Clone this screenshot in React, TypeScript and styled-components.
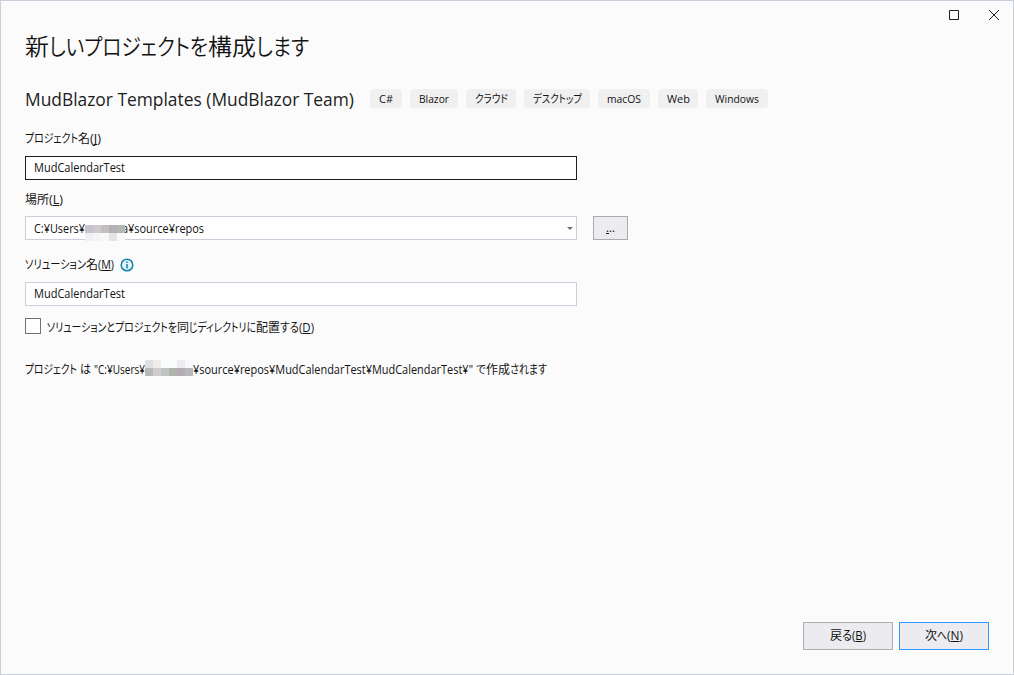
import React, { useLayoutEffect, useRef, useState } from "react";
import styled, { createGlobalStyle } from "styled-components";

const Global = createGlobalStyle`
  * { box-sizing: border-box; }
  body { margin: 0; background: #fbfbfb; color: #121212; font: 12px/16px "Open Sans", "Noto Sans CJK JP", sans-serif; }
`;

const Dialog = styled.main`
  width: 1014px; height: 675px; display: flex; flex-direction: column;
  border: 1px solid #cccedb; background: #fbfbfb; white-space: nowrap;
`;
const TitleBar = styled.header`
  height: 28px; display: flex; justify-content: flex-end; align-items: center;
  gap: 28px; padding-right: 13px;
`;
const Body = styled.section`flex: 1; padding: 0 24px; display: flex; flex-direction: column; align-items: flex-start;`;
const Heading = styled.h1`margin: 0; height: 36px; line-height: 33px; font-size: 23px; font-weight: 350; font-family: "Noto Sans CJK JP", sans-serif;`;
const TemplateRow = styled.div`display: flex; align-items: center; height: 28px; margin-top: 20px; gap: 16px;`;
const TemplateName = styled.h2`margin: 0; font-size: 18px; line-height: 28px; font-weight: 400; color: #1e1e1e;`;
const Tags = styled.div`display: flex; gap: 8px; margin-top: -1px;`;
const Tag = styled.span<{ $w: number }>`
  width: ${p => p.$w}px; height: 19px; border-radius: 4px; background: #f0f0f0; color: #121212;
  display: flex; justify-content: center; font-size: 11px; line-height: 19px;
`;
const Label = styled.label<{ $top: number }>`display: flex; align-items: center; height: 16px; margin-top: ${p => p.$top}px;`;
const Field = styled.div<{ $active?: boolean; $top: number }>`
  width: 552px; height: 24px; margin-top: ${p => p.$top}px; padding: 0 2px 0 8px; background: #fff;
  border: 1px solid ${p => (p.$active ? "#1e1e1e" : "#cccedb")}; line-height: 22px;
  display: flex; align-items: center; justify-content: space-between;
`;
const FieldRow = styled.div`display: flex; gap: 16px;`;
const Button = styled.button<{ $w: number; $h: number; $primary?: boolean }>`
  width: ${p => p.$w}px; height: ${p => p.$h}px; padding: 0; background: #ececf0; color: #121212;
  border: 1px solid ${p => (p.$primary ? "#3399ff" : "#acacac")}; font: inherit;
  display: flex; justify-content: center; align-items: center;
`;
const Browse = styled(Button)`margin-top: 8px;`;
const CheckRow = styled.label`display: flex; align-items: center; gap: 6px; height: 16px; margin-top: 12px;`;
const CheckText = styled.span`display: flex; padding-top: 3px;`;
const CheckBox = styled.span`width: 16px; height: 16px; border: 1px solid #717171; background: #fefefe;`;
const Summary = styled.p`margin: 28px 0 0; height: 16px; display: flex;`;
const Footer = styled.footer`display: flex; justify-content: flex-end; gap: 6px; padding: 0 24px 24px;`;
const Key = styled.span`text-decoration: underline; text-decoration-thickness: 1px; text-underline-offset: 1px; text-decoration-skip-ink: none;`;
const Info = styled.svg`margin-left: 6px;`;

const Slot = styled.span<{ $w: number; $gap?: number }>`
  display: inline-block; width: ${p => p.$w}px; margin-left: ${p => p.$gap ?? 0}px;
  font-feature-settings: "palt"; white-space: pre;
`;
const Inner = styled.span`display: inline-block; transform-origin: 0 50%;`;

/* A run of text condensed or widened to an exact advance width. */
function Run({ w, gap, children }: { w: number; gap?: number; children: React.ReactNode }) {
  const ref = useRef<HTMLSpanElement>(null);
  const [scale, setScale] = useState(1);
  useLayoutEffect(() => {
    const natural = ref.current?.getBoundingClientRect().width;
    if (natural) setScale(w / natural);
  }, [w]);
  return (
    <Slot $w={w} $gap={gap}>
      <Inner ref={ref} style={{ transform: `scaleX(${scale})` }}>{children}</Inner>
    </Slot>
  );
}

const Access = ({ k, w }: { k: string; w: number }) => <Run w={w}>(<Key>{k}</Key>)</Run>;

const Masked = styled.span<{ $cols: number; $w: number; $top: number }>`
  display: grid; grid-template-columns: repeat(${p => p.$cols}, 8px); grid-auto-rows: 8px;
  width: ${p => p.$w}px; height: 16px; margin-top: ${p => p.$top}px; z-index: 1;
`;
const Cell = styled.i<{ $c: string }>`background: ${p => p.$c};`;
const Mask = ({ cells, cols, top }: { cells: string[]; cols: number; top: number }) => (
  <Masked $cols={cols} $w={cols * 8} $top={top}>{cells.map((c, i) => <Cell key={i} $c={c} />)}</Masked>
);
const Path = styled.span`display: flex; height: 22px; line-height: 24px;`;
const Caret = styled.svg`margin-top: 2px;`;

const tags: [string, number, number][] = [
  ["C#", 32, 14], ["Blazor", 48, 30], ["クラウド", 50, 33], ["デスクトップ", 66, 49],
  ["macOS", 52, 34], ["Web", 40, 23], ["Windows", 62, 44],
];

export default function App() {
  return (
    <>
      <Global />
      <Dialog>
        <TitleBar>
          <svg width="12" height="12" viewBox="0 0 12 12"><path d="M1.5 1.5h9v9h-9z" fill="none" stroke="#1e1e1e" /></svg>
          <svg width="12" height="12" viewBox="0 0 12 12"><path d="M1 1l10 10M11 1L1 11" stroke="#1e1e1e" /></svg>
        </TitleBar>
        <Body>
          <Heading>
            <Run w={24}>新</Run><Run w={159}>しいプロジェクトを</Run><Run w={48}>構成</Run><Run w={53}>します</Run>
          </Heading>
          <TemplateRow>
            <TemplateName><Run w={329}>MudBlazor Templates (MudBlazor Team)</Run></TemplateName>
            <Tags>{tags.map(([t, w, tw]) => <Tag key={t} $w={w}><Run w={tw}>{t}</Run></Tag>)}</Tags>
          </TemplateRow>
          <Label $top={18}><Run w={53}>プロジェクト</Run><Run w={12}>名</Run><Access k="J" w={11} /></Label>
          <Field $active $top={9}><Run w={91}>MudCalendarTest</Run></Field>
          <Label $top={12}><Run w={24}>場所</Run><Access k="L" w={14} /></Label>
          <FieldRow>
            <Field $top={8}>
              <Path>
                <Run w={51}>C:¥Users¥</Run>
                <Mask cols={5} top={8} cells={["#c8c4cc", "#d0c8cc", "#c0c0bc", "#b4b0b4", "#b4b8b4", "#f0f0f4", "#f4f4f4", "#f8f8f8", "#e4e4e4", "#f8f8f8"]} />
                <Run w={82} gap={-3}>a¥source¥repos</Run>
              </Path>
              <Caret width="8" height="6" viewBox="0 0 8 6"><path d="M1 1h6L4 4z" fill="#717171" /></Caret>
            </Field>
            <Browse $w={35} $h={24}><Run w={9}><Key>.</Key>..</Run></Browse>
          </FieldRow>
          <Label $top={17}>
            <Run w={61}>ソリューション</Run><Run w={12}>名</Run><Access k="M" w={16} />
            <Info width="14" height="14" viewBox="0 0 14 14"><circle cx="7" cy="7" r="5.8" fill="#e3f3fa" stroke="#1382ab" strokeWidth="1.5" /><path d="M7 6v4.4M7 3.4v1.5" stroke="#1382ab" strokeWidth="1.5" /></Info>
          </Label>
          <Field $top={9}><Run w={91}>MudCalendarTest</Run></Field>
          <CheckRow>
            <CheckBox />
            <CheckText><Run w={130}>ソリューションとプロジェクトを</Run><Run w={12}>同</Run><Run w={67}>じディレクトリに</Run><Run w={24}>配置</Run><Run w={19}>する</Run><Access k="D" w={15} /></CheckText>
          </CheckRow>
          <Summary>
            <Run w={52}>プロジェクト</Run><Run w={11} gap={3}>は</Run><Run w={51} gap={3}>"C:¥Users¥</Run>
            <Mask cols={6} top={-2} cells={["#e0e0e0", "#f0ecec", "#f8fcfc", "#fbfbfb", "#ececf0", "#f8f8f8", "#b8b8b8", "#d0cccc", "#c0c4c4", "#b0b4ac", "#b4acb4", "#b8b8b8"]} />
            <Run w={280}>¥source¥repos¥MudCalendarTest¥MudCalendarTest¥"</Run>
            <Run w={10} gap={3}>で</Run><Run w={24}>作成</Run><Run w={37}>されます</Run>
          </Summary>
        </Body>
        <Footer>
          <Button $w={90} $h={28}><Run w={12}>戻</Run><Run w={10}>る</Run><Access k="B" w={14} /></Button>
          <Button $w={90} $h={28} $primary><Run w={12}>次</Run><Run w={10}>へ</Run><Access k="N" w={16} /></Button>
        </Footer>
      </Dialog>
    </>
  );
}
